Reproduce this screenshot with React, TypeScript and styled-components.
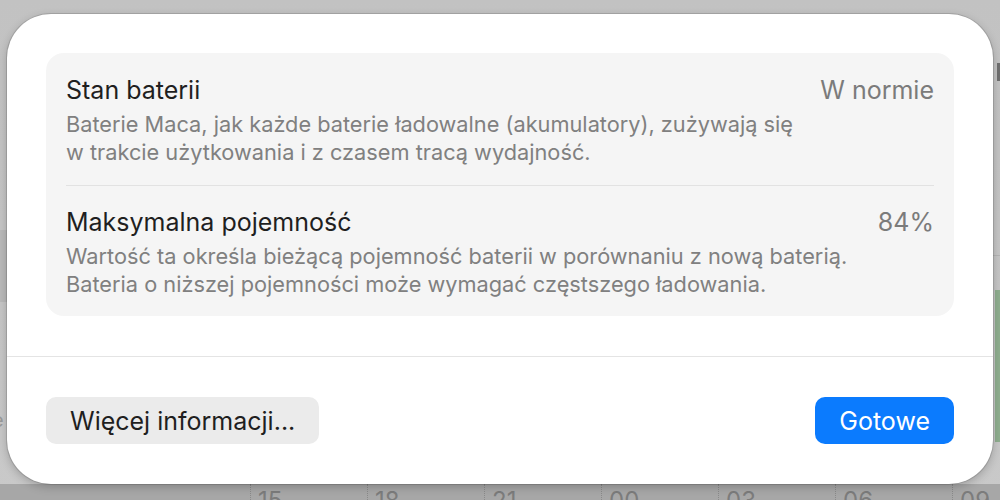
import React from "react";
import styled, { createGlobalStyle } from "styled-components";

const GlobalStyle = createGlobalStyle`
  html, body { margin: 0; padding: 0; }
  body { font-family: Inter, "Noto Sans", "Liberation Sans", sans-serif; -webkit-font-smoothing: antialiased; }
`;

const Screen = styled.div`
  position: relative;
  width: 1000px;
  height: 500px;
  overflow: hidden;
  box-sizing: border-box;
  padding: 14px 7px 16px 7px;
  background: linear-gradient(180deg, #c2c2c2 0%, #c6c6c6 60%, #c9c9c9 100%);
`;

const LeftStrip = styled.div`
  position: absolute;
  left: 0;
  top: 230px;
  width: 7px;
  height: 72px;
  background: #b9b9b9;
`;

const LeftGlyph = styled.span`
  position: absolute;
  left: -8px;
  top: 408px;
  font-size: 20px;
  color: #9a9a9a;
`;

const RightMark = styled.div`
  position: absolute;
  right: 0;
  top: 63px;
  width: 3px;
  height: 18px;
  background: #6f6f6f;
`;

const RightLine = styled.div`
  position: absolute;
  right: 0;
  top: 255px;
  width: 7px;
  height: 1px;
  background: #b4b4b4;
`;

const RightGreen = styled.div`
  position: absolute;
  right: 0;
  top: 290px;
  width: 5px;
  height: 152px;
  background: #8fae8f;
`;

const AxisBand = styled.div`
  position: absolute;
  left: 0;
  right: 0;
  bottom: 0;
  height: 16px;
  background: #a7a7a7;
  display: flex;
  padding-left: 250px;
`;

const Tick = styled.div`
  width: 116px;
  flex: none;
  display: flex;
  align-items: flex-start;
  gap: 7px;
  border-left: 1px dotted #8a8a8a;
  height: 16px;
`;

const TickLabel = styled.span`
  font-size: 24px;
  line-height: 24px;
  margin-top: 5px;
  color: #7c7c7c;
`;

const Dialog = styled.div`
  position: relative;
  z-index: 1;
  height: 470px;
  box-sizing: border-box;
  background: #ffffff;
  border-radius: 44px;
  box-shadow: 0 0 0 1px rgba(0, 0, 0, 0.12), 0 3px 10px rgba(0, 0, 0, 0.22);
  display: flex;
  flex-direction: column;
  padding-top: 39px;
`;

const Card = styled.div`
  margin: 0 39px;
  background: #f5f5f5;
  border-radius: 18px;
  padding: 0 20px;
  display: flex;
  flex-direction: column;
  height: 263px;
  box-sizing: border-box;
`;

const Row = styled.div<{ $divider?: boolean }>`
  display: grid;
  grid-template-columns: 1fr auto;
  column-gap: 20px;
  padding: ${(p) => (p.$divider ? "22px 0 18px" : "23px 0 19px")};
  border-top: ${(p) => (p.$divider ? "1px solid #e2e2e2" : "none")};
`;

const Title = styled.div`
  font-size: 25px;
  line-height: 28px;
  color: #1f1f1f;
  margin-bottom: 6px;
`;

const Value = styled.div`
  font-size: 25px;
  line-height: 28px;
  color: #7b7b7b;
  text-align: right;
`;

const Desc = styled.div`
  grid-column: 1 / -1;
  font-size: 21.75px;
  line-height: 28px;
  color: #808080;
  white-space: nowrap;
`;

const Footer = styled.div`
  margin-top: 40px;
  border-top: 1px solid #e4e4e4;
  padding: 40px 39px 0;
  display: flex;
  justify-content: space-between;
  align-items: flex-start;
`;

const Button = styled.button<{ $primary?: boolean }>`
  height: 47px;
  border: none;
  border-radius: 10px;
  font-family: inherit;
  font-size: 25px;
  padding: 0 24px;
  background: ${(p) => (p.$primary ? "#0b7bfe" : "#ebebeb")};
  color: ${(p) => (p.$primary ? "#ffffff" : "#1f1f1f")};
  cursor: default;
`;

const ticks = ["15", "18", "21", "00", "03", "06", "09"];

export default function App() {
  return (
    <>
      <GlobalStyle />
      <Screen>
        <LeftStrip />
        <LeftGlyph>e</LeftGlyph>
        <RightMark />
        <RightLine />
        <RightGreen />
        <AxisBand>
          {ticks.map((t) => (
            <Tick key={t}>
              <span />
              <TickLabel>{t}</TickLabel>
            </Tick>
          ))}
        </AxisBand>
        <Dialog>
          <Card>
            <Row>
              <Title>Stan baterii</Title>
              <Value>W normie</Value>
              <Desc>
                Baterie Maca, jak każde baterie ładowalne (akumulatory), zużywają się
                <br />
                w trakcie użytkowania i z czasem tracą wydajność.
              </Desc>
            </Row>
            <Row $divider>
              <Title>Maksymalna pojemność</Title>
              <Value>84%</Value>
              <Desc>
                Wartość ta określa bieżącą pojemność baterii w porównaniu z nową baterią.
                <br />
                Bateria o niższej pojemności może wymagać częstszego ładowania.
              </Desc>
            </Row>
          </Card>
          <Footer>
            <Button>Więcej informacji...</Button>
            <Button $primary>Gotowe</Button>
          </Footer>
        </Dialog>
      </Screen>
    </>
  );
}
